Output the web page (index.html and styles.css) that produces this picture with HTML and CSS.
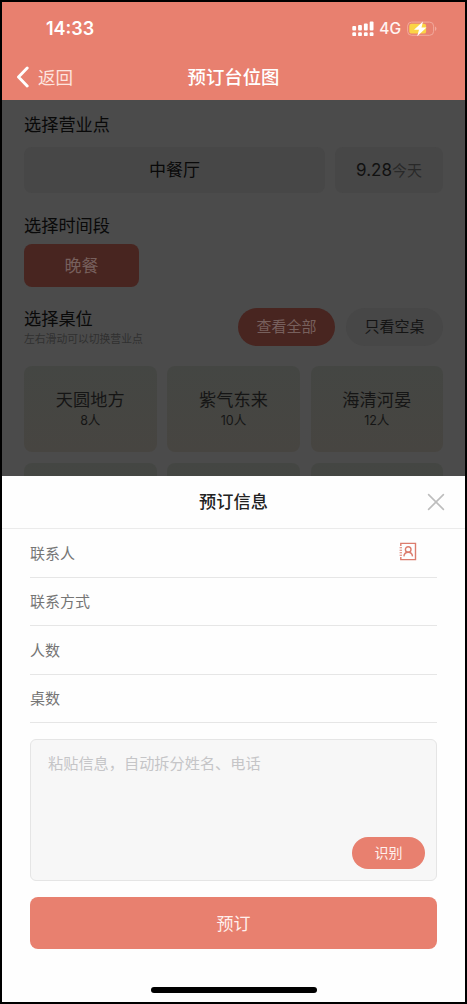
FILE: index.html
```html
<!DOCTYPE html>
<html lang="zh-CN">
<head>
<meta charset="utf-8">
<title>预订台位图</title>
<link rel="stylesheet" href="styles.css">
</head>
<body>
<div class="phone">
  <header class="header">
    <div class="status">
      <span class="clock">14:33</span>
      <div class="indicators">
        <svg class="signal" width="22" height="16" viewBox="0 0 22 16" fill="#fff">
          <rect x="0.300" y="5" width="3.8" height="4.6" rx="1"/><rect x="6.100" y="4" width="3.8" height="5.6" rx="1"/><rect x="11.900" y="2.5" width="3.8" height="7.1" rx="1"/><rect x="17.7" y="0.5" width="3.8" height="9.1" rx="1"/>
          <rect x="0.300" y="11.3" width="3.8" height="3.8" rx="1.2"/><rect x="6.100" y="11.3" width="3.8" height="3.8" rx="1.2"/><rect x="11.900" y="11.3" width="3.8" height="3.8" rx="1.2"/><rect x="17.7" y="11.3" width="3.8" height="3.8" rx="1.2"/>
        </svg>
        <span class="network">4G</span>
        <svg class="battery" width="30" height="16" viewBox="0 0 30 16">
          <rect x="0.6" y="1.1" width="26" height="13.2" rx="4" fill="none" stroke="#f2a99c"/>
          <path d="M28 5.5a2.4 2.4 0 0 1 0 4.4z" fill="#f2a99c"/>
          <rect x="2.3" y="2.8" width="16.8" height="9.8" rx="2.2" fill="#fbd446"/>
          <path d="M16 .6 7 8.800h5L10.2 15.300l9.300-8.700h-5z" fill="#fff"/>
        </svg>
      </div>
    </div>
    <nav class="navbar">
      <div class="back">
        <svg width="13" height="22" viewBox="0 0 13 22"><path d="M11.2 2 2.500 11l8.700 9" fill="none" stroke="#fff" stroke-width="2.9" stroke-linecap="round" stroke-linejoin="round"/></svg>
        <span>返回</span>
      </div>
      <h1 class="nav-title">预订台位图</h1>
    </nav>
  </header>

  <main class="booking">
    <h2 class="section-title">选择营业点</h2>
    <div class="venue-row">
      <div class="venue">中餐厅</div>
      <div class="date">9.28<span class="today">今天</span></div>
    </div>
    <h2 class="section-title period-title">选择时间段</h2>
    <div class="period">晚餐</div>
    <div class="table-head">
      <div>
        <h2 class="section-title">选择桌位</h2>
        <p class="hint">左右滑动可以切换营业点</p>
      </div>
      <div class="filters">
        <span class="filter active">查看全部</span>
        <span class="filter">只看空桌</span>
      </div>
    </div>
    <div class="tables">
      <div class="table"><b>天圆地方</b><span>8人</span></div>
      <div class="table"><b>紫气东来</b><span>10人</span></div>
      <div class="table"><b>海清河晏</b><span>12人</span></div>
      <div class="table"></div>
      <div class="table"></div>
      <div class="table"></div>
    </div>
  </main>

  <section class="sheet">
    <div class="sheet-head">
      <h2 class="sheet-title">预订信息</h2>
      <svg class="close" width="18" height="18" viewBox="0 0 18 18"><path d="M1.6 1.6l14.8 14.8M16.4 1.6 1.6 16.4" stroke="#bdbdbd" stroke-width="1.6" stroke-linecap="round"/></svg>
    </div>
    <div class="form">
      <div class="field">
        <span>联系人</span>
        <svg class="contacts" width="18" height="19" viewBox="0 0 18 19" fill="none" stroke="#dc7c6d" stroke-width="1.4">
          <path d="M1.8 4V1.4h14.700v16.2h-14.700V15"/>
          <path d="M.600 5.8h2.400M.600 8.3h2.400M.600 10.8h2.400M.600 13.3h2.400" stroke-width="1.1"/>
          <circle cx="9.200" cy="7.5" r="2.8"/>
          <path d="M4.900 14.400c.2-2.700 1.500-4.200 4.300-4.200s4.100 1.500 4.300 4.200"/>
        </svg>
      </div>
      <div class="field"><span>联系方式</span></div>
      <div class="field"><span>人数</span></div>
      <div class="field"><span>桌数</span></div>
      <div class="paste">
        <p class="placeholder">粘贴信息，自动拆分姓名、电话</p>
        <span class="recognize">识别</span>
      </div>
      <div class="submit">预订</div>
    </div>
    <div class="home-bar"></div>
  </section>
</div>
</body>
</html>
```

FILE: styles.css
```css
* { box-sizing: border-box; }
body { margin: 0; background: #000; font-family: "Noto Sans CJK SC", sans-serif; }
h1, h2, p { margin: 0; font-weight: 400; }
svg { display: block; flex: none; }

.phone {
  width: 467px;
  height: 1004px;
  border: 2px solid #000;
  display: flex;
  flex-direction: column;
  overflow: hidden;
  background: #4b4b4b;
}

.header { height: 98px; flex: none; background: #e8806f; color: #fff; }
.status {
  height: 52px;
  padding: 2px 28px 0 44px;
  display: flex;
  align-items: center;
  justify-content: space-between;
}
.clock { font: 600 18px/22px Inter, sans-serif; }
.indicators { display: flex; align-items: center; }
.network { font: 500 15.5px/20px Inter, sans-serif; margin: 0 6px 0 5px; color: #fff4f2; }
.navbar {
  height: 46px;
  padding: 0 14px;
  display: grid;
  grid-template-columns: 1fr auto 1fr;
  align-items: center;
}
.back { display: flex; align-items: center; gap: 9px; font-size: 17.5px; line-height: 24px; color: #fde4df; }
.back span { margin-top: -1px; }
.nav-title { font-size: 18.4px; line-height: 24px; font-weight: 500; margin-top: -2px; }

.booking { height: 376px; flex: none; padding: 12px 22px 0; overflow: hidden; color: #090909; }
.section-title { font-size: 17.2px; line-height: 24px; }
.venue-row { display: grid; grid-template-columns: 301px 108px; gap: 10px; margin-top: 11px; }
.venue, .date {
  height: 46px;
  border-radius: 8px;
  background: #474747;
  display: flex;
  align-items: center;
  justify-content: center;
  font-size: 17px;
}
.venue { padding-bottom: 4px; }
.date { font-family: Inter, "Noto Sans CJK SC", sans-serif; color: #111; }
.today { font-size: 15px; color: #292929; margin-top: -2px; }
.period-title { margin-top: 20px; }
.period {
  width: 115px;
  height: 43px;
  margin-top: 7px;
  padding-bottom: 2px;
  border-radius: 8px;
  background: #482520;
  color: #77605d;
  display: flex;
  align-items: center;
  justify-content: center;
  font-size: 17px;
}
.table-head { display: flex; justify-content: space-between; margin-top: 19px; height: 60px; }
.hint { font-size: 10.8px; line-height: 16px; color: #303030; }
.filters { display: flex; gap: 11px; padding-top: 2px; }
.filter {
  width: 97px;
  height: 38px;
  border-radius: 19px;
  background: #474747;
  color: #141414;
  display: flex;
  align-items: center;
  justify-content: center;
  font-size: 15px;
  padding-bottom: 4px;
}
.filter.active { background: #482520; color: #77605d; }
.tables { display: grid; grid-template-columns: repeat(3, 132.5px); justify-content: space-between; row-gap: 11px; }
.table {
  height: 86px;
  border-radius: 8px;
  background: linear-gradient(#444643, #474541);
  color: #151515;
  display: flex;
  flex-direction: column;
  align-items: center;
  padding-top: 21px;
}
.table b { font-size: 17.2px; line-height: 24px; font-weight: 400; }
.table span { font-family: Inter, "Noto Sans CJK SC", sans-serif; font-size: 12.5px; line-height: 20px; }

.sheet { flex: 1; background: #fefefe; display: flex; flex-direction: column; }
.sheet-head {
  height: 53px;
  flex: none;
  padding: 0 20px 2px;
  border-bottom: 1px solid #ebebeb;
  display: grid;
  grid-template-columns: 1fr auto 1fr;
  align-items: center;
}
.sheet-title { grid-column: 2; font-size: 17.2px; line-height: 24px; font-weight: 500; color: #222; }
.close { justify-self: end; margin-top: 1px; }
.form { padding: 0 28px; }
.field {
  height: 48.5px;
  border-bottom: 1px solid #e6e6e6;
  display: flex;
  align-items: center;
  justify-content: space-between;
  padding: 0 20px 1px 0;
  font-size: 15px;
  color: #757575;
}
.contacts { margin-bottom: 1px; }
.paste {
  height: 142px;
  margin-top: 16px;
  padding: 11px 11px 11px 17px;
  border: 1px solid #e5e5e5;
  border-radius: 6px;
  background: #f7f7f7;
  display: flex;
  flex-direction: column;
  justify-content: space-between;
}
.placeholder { font-size: 15.2px; line-height: 22px; color: #c5c5c7; }
.recognize {
  align-self: flex-end;
  width: 73px;
  height: 32px;
  border-radius: 16px;
  background: #e8806f;
  color: #fff0ed;
  font-size: 14px;
  line-height: 31px;
  text-align: center;
}
.submit {
  height: 52px;
  margin-top: 16px;
  border-radius: 8px;
  background: #e8806f;
  color: #fff0ed;
  font-size: 17px;
  line-height: 51px;
  text-align: center;
}
.home-bar { width: 166px; height: 6px; margin: auto auto 9px; border-radius: 3px; background: #000; }
```
